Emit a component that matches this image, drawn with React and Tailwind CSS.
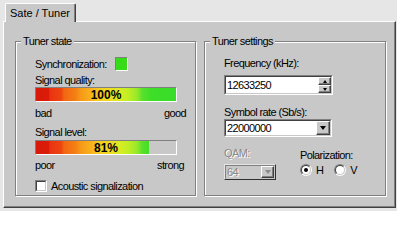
import React from "react";

const sunkenOuter = "border border-t-[#808080] border-l-[#808080] border-b-white border-r-white";
const sunkenInner = "border border-t-[#404040] border-l-[#404040] border-b-[#c8c8c8] border-r-[#c8c8c8]";
const raised = "border border-t-white border-l-white border-b-[#404040] border-r-[#404040] shadow-[inset_-1px_-1px_0_#808080]";

function Bar({ pct }) {
  return (
    <div className={`relative h-[15px] w-[142px] bg-[#c8c8c8] ${sunkenOuter}`}>
      <div className="h-full overflow-hidden" style={{ width: `${pct}%` }}>
        <div className="h-full w-[140px] bg-[linear-gradient(to_right,#d81808_0%,#dc1c0a_9%,#ea3410_10%,#ee4410_18%,#f26612_20%,#f47e14_28%,#f69a18_32%,#f8b01c_39%,#f4cc20_45%,#eedc22_53%,#d8ec22_60%,#c0ee24_66%,#9ae82a_72%,#58e02a_76%,#3ede28_82%,#38dc28_100%)]" />
      </div>
      <span className="absolute inset-0 flex items-center justify-center text-[12px] font-bold leading-none tracking-normal text-black">
        {pct}%
      </span>
    </div>
  );
}

function Radio({ checked }) {
  return (
    <span className={`flex h-[12px] w-[12px] rounded-full ${sunkenOuter}`}>
      <span className={`flex h-full w-full items-center justify-center rounded-full bg-white ${sunkenInner}`}>
        {checked && <span className="h-[4px] w-[4px] rounded-full bg-black" />}
      </span>
    </span>
  );
}

function DownTri({ color = "border-t-black", w = "border-x-[3.5px]", h = "border-t-[4px]" }) {
  return <span className={`h-0 w-0 border-x-transparent ${w} ${h} ${color}`} />;
}

function UpTri() {
  return <span className="h-0 w-0 border-x-[2.5px] border-b-[3px] border-x-transparent border-b-black" />;
}

function GroupBox({ title, width, children }) {
  return (
    <fieldset
      className={`h-[161px] ${width} border border-[#808080] shadow-[inset_1px_1px_0_#fff,1px_1px_0_#fff]`}
    >
      <legend className="ml-[5px] h-[12px] bg-[#c8c8c8] px-[2px] leading-[12px]">{title}</legend>
      <div className="pl-[19px]">{children}</div>
    </fieldset>
  );
}

export default function App() {
  return (
    <div className="h-[211px] w-[397px] overflow-hidden bg-[#e6e6e6] pl-[3px] pt-[3px] font-['Liberation_Sans',Arial,sans-serif] text-[11px] leading-[14px] tracking-[-0.6px] text-black">
      {/* Tab strip */}
      <div className="flex">
        <div className="relative z-10 -mb-px ml-[2px] flex h-[19px] w-[71px] items-center rounded-t-[2px] border-l border-t border-r border-l-white border-t-white border-r-[#404040] bg-[#c8c8c8] pb-[1px] pl-[4px] tracking-normal shadow-[inset_-1px_0_0_#808080]">
          Sate / Tuner
        </div>
      </div>

      {/* Panel */}
      <div className="h-[187px] w-[393px] border border-t-white border-l-white border-b-[#404040] border-r-[#404040] bg-[#c8c8c8] pl-[11px] pt-[13px] shadow-[inset_-1px_-1px_0_#808080]">
        <div className="flex gap-[8px]">
          <GroupBox title="Tuner state" width="w-[181px]">
            <div className="mt-[10px] flex h-[14px] items-center">
              <span className="w-[80px]">Synchronization:</span>
              <span className={`flex h-[14px] w-[13px] ${sunkenOuter}`}>
                <span className="h-full w-full bg-[#36dc18]" />
              </span>
            </div>
            <div className="mt-[2px]">Signal quality:</div>
            <Bar pct={100} />
            <div className="mt-[4px] flex w-[151px] justify-between">
              <span>bad</span>
              <span>good</span>
            </div>
            <div className="mt-[5px]">Signal level:</div>
            <div className="mt-[1px]">
              <Bar pct={81} />
            </div>
            <div className="mt-[3px] flex w-[149px] justify-between">
              <span>poor</span>
              <span>strong</span>
            </div>
            <div className="mt-[7px] flex h-[13px] items-center">
              <span className={`flex h-[12px] w-[12px] ${sunkenOuter}`}>
                <span className={`h-full w-full bg-white ${sunkenInner}`} />
              </span>
              <span className="ml-[4px]">Acoustic signalization</span>
            </div>
          </GroupBox>

          <GroupBox title="Tuner settings" width="w-[182px]">
            <div className="mt-[9px]">Frequency (kHz):</div>
            <div className={`mt-[5px] flex h-[20px] w-[109px] ${sunkenOuter}`}>
              <div className={`flex flex-1 bg-white ${sunkenInner}`}>
                <span className="pl-[1px] leading-[16px]">12633250</span>
                <div className="ml-auto flex w-[13px] flex-col">
                  <span className={`flex h-1/2 items-center justify-center bg-[#c8c8c8] ${raised}`}>
                    <UpTri />
                  </span>
                  <span className={`flex h-1/2 items-center justify-center bg-[#c8c8c8] ${raised}`}>
                    <DownTri w="border-x-[2.5px]" h="border-t-[3px]" />
                  </span>
                </div>
              </div>
            </div>

            <div className="mt-[10px]">Symbol rate (Sb/s):</div>
            <div className={`flex h-[18px] w-[108px] ${sunkenOuter}`}>
              <div className={`flex flex-1 items-center bg-white ${sunkenInner}`}>
                <span className="pl-[1px]">22000000</span>
                <span className={`ml-auto flex h-full w-[14px] items-center justify-center bg-[#c8c8c8] ${raised}`}>
                  <DownTri />
                </span>
              </div>
            </div>

            <div className="mt-[9px] flex">
              <div className="w-[76px]">
                <div className="text-[#8a8a8a] [text-shadow:1px_1px_0_#fff]">QAM:</div>
                <div className="mt-[4px] flex h-[16px] w-[52px] border border-t-[#e4e4e4] border-l-[#e4e4e4] border-b-[#303030] border-r-[#303030]">
                  <div className="flex flex-1 items-center border border-t-[#808080] border-l-[#808080] border-b-[#c8c8c8] border-r-[#c8c8c8] bg-[#c8c8c8]">
                    <span className="pl-[1px] text-[#8a8a8a] [text-shadow:1px_1px_0_#fff]">64</span>
                    <span className={`ml-auto flex h-full w-[13px] items-center justify-center bg-[#c8c8c8] ${raised}`}>
                      <DownTri color="border-t-[#8a8a8a]" w="border-x-[3px]" h="border-t-[4px]" />
                    </span>
                  </div>
                </div>
              </div>
              <div className="mt-[2px]">
                <div>Polarization:</div>
                <div className="mt-[2px] flex h-[12px] items-center">
                  <Radio checked />
                  <span className="ml-[4px]">H</span>
                  <span className="ml-[11px]">
                    <Radio />
                  </span>
                  <span className="ml-[4px]">V</span>
                </div>
              </div>
            </div>
          </GroupBox>
        </div>
      </div>
    </div>
  );
}
